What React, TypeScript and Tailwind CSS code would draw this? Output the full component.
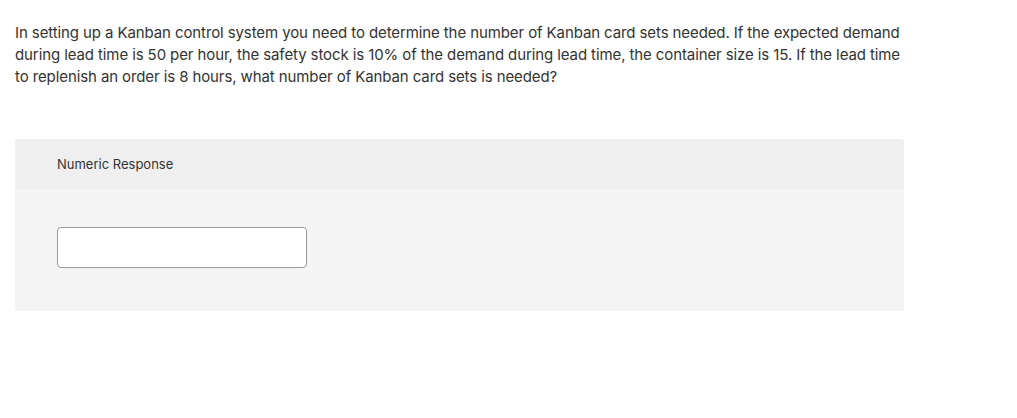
import React from 'react';

const App = () => {
    return (
        <div className="min-h-screen bg-white" style={{ fontFamily: 'Inter, "Open Sans", sans-serif' }}>
            <div className="w-[889px] ml-[15px] pt-[22px]">
                <p className="w-[895px] text-[15px] leading-[22px] tracking-[-0.1px] text-[#333333]">
                    In setting up a Kanban control system you need to determine the number of Kanban card sets needed. If the expected demand during lead time is 50 per hour, the safety stock is 10% of the demand during lead time, the container size is 15. If the lead time to replenish an order is 8 hours, what number of Kanban card sets is needed?
                </p>

                <div className="mt-[51px] rounded-[3px] overflow-hidden">
                    <div className="h-[50px] bg-[#efefef] flex items-center px-[42px] pt-[2px]">
                        <span className="text-[13px] text-[#333333]">Numeric Response</span>
                    </div>
                    <div className="bg-[#f4f4f4] pt-[38px] pb-[43px] px-[42px]">
                        <input
                            type="text"
                            className="block w-[250px] h-[41px] bg-white border border-[#9a9a9a] rounded-[4px] px-2 text-[14px] focus:outline-none"
                        />
                    </div>
                </div>
            </div>
        </div>
    );
};

export default App;
